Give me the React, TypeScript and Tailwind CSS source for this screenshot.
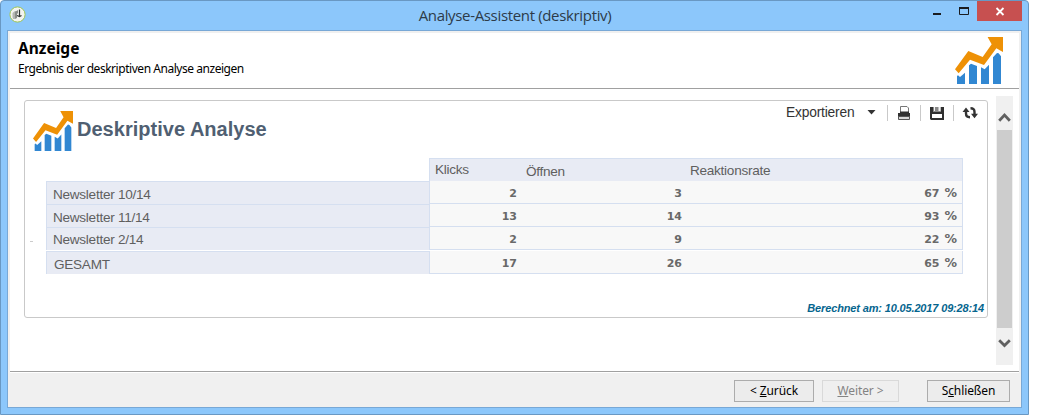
import type { ReactNode } from "react";

const rows = [
  { label: "Newsletter 10/14", clicks: "2", opens: "3", rate: "67" },
  { label: "Newsletter 11/14", clicks: "13", opens: "14", rate: "93" },
  { label: "Newsletter 2/14", clicks: "2", opens: "9", rate: "22" },
  { label: "GESAMT", clicks: "17", opens: "26", rate: "65" },
];

function ChartLogo({ className }: { className: string }) {
  return (
    <svg viewBox="0 0 144 141" preserveAspectRatio="none" className={className}>
      <path
        fill="#ee9106"
        d="M0 97 40 42 83 60 110 22 99 2 98 0H144V45L137 41 124 34 87 84 45 68 11 109Z"
      />
      <path
        fill="#3187d2"
        d="M6 117 9 115 15 120 30 107V141H6ZM42 85 48 80 66 87V141H42ZM78 91 89 97 102 83V141H78ZM114 61 126 48 131 49 138 58V141H114Z"
      />
    </svg>
  );
}

function TitleBar() {
  return (
    <header className="flex h-[29px] shrink-0 items-start">
      <svg viewBox="0 0 17 17" className="mt-[5px] ml-[2px] h-[17px] w-[17px]">
        <circle cx="8.5" cy="8.5" r="7.6" fill="#f4f4ef" stroke="#a1c653" />
        <path d="M3.5 7 6 5 8 5V8L6 9V13L4 13 3.5 11Z" fill="#b4b6b0" />
        <path d="M6 6 9 4V7L8 8V12L6 13Z" fill="#8b8e89" />
        <path d="M10.5 3.5V10.5M8 9.5 10.5 10.5 12.5 9.5" stroke="#30332f" strokeWidth="1.2" fill="none" />
      </svg>
      <h1 className="mt-[3px] w-[963px] pl-[15px] text-center font-['Open_Sans',sans-serif] text-[15px] leading-[22px] tracking-[-0.34px] text-[#2d3b49]">
        Analyse-Assistent (deskriptiv)
      </h1>
      <div className="-ml-[57px] flex">
        <svg viewBox="0 0 45 20" className="h-5 w-[45px]">
          <path d="M1 13H9" stroke="#1a1c20" strokeWidth="2" />
          <path d="M27.5 6.5H36.5V13.5H27.5Z" fill="none" stroke="#1a1c20" />
          <path d="M27 7H37" stroke="#1a1c20" strokeWidth="2" />
        </svg>
        <div className="flex h-5 w-[45px] justify-center bg-[#c75050]">
          <svg viewBox="0 0 45 20" className="h-5 w-[45px]">
            <path d="M19.5 7 26.5 14M26.5 7 19.5 14" stroke="#fff" strokeWidth="1.8" />
          </svg>
        </div>
      </div>
    </header>
  );
}

function Separator() {
  return <div className="h-[16px] w-px bg-[#c9c9c9]" />;
}

function Toolbar() {
  return (
    <div className="mt-[3px] flex h-[17px] items-center">
      <span className="w-[81px] pl-px font-['Liberation_Sans',sans-serif] text-[13.8px] leading-[17px] tracking-[-0.2px] text-[#333]">
        Exportieren
      </span>
      <svg viewBox="0 0 20 16" className="-ml-[4px] h-4 w-[20px]">
        <path d="M5.5 5H13.5L9.5 9.5Z" fill="#333" />
      </svg>
      <div className="w-[5px]" />
      <Separator />
      <svg viewBox="0 0 32 16" className="h-4 w-8" fill="none">
        <path d="M12.5 7V1.5H19L20.5 3V7" stroke="#777" fill="#fff" />
        <path d="M10 8H12V6.5H21V8H22V12H10Z" fill="#303030" />
        <path d="M10.5 11.5H21.5V14.5H10.5Z" fill="#d7d7d7" stroke="#555" />
      </svg>
      <Separator />
      <svg viewBox="0 0 32 16" className="h-4 w-8" fill="none">
        <path d="M9 2H23V15H10L9 14Z" fill="#303030" />
        <path d="M12 2H20V7H12Z" fill="#888" />
        <path d="M13 2V6H14V2ZM17.5 2H19.5V6H17.5Z" fill="#f5f5f5" />
        <path d="M11 9H21V13H11Z" fill="#fff" />
      </svg>
      <Separator />
      <svg viewBox="0 0 32 16" className="h-4 w-[32px]" fill="none">
        <path d="M12 5V8.5C12 11 13.3 12.2 16 12.2M20.5 10.5V7C20.5 4.5 19.2 3.3 16.5 3.3" stroke="#333" strokeWidth="2.4" />
        <path d="M8.5 7 12 2.5 15.5 7ZM17 8.8 20.5 13.2 24 8.8Z" fill="#333" />
      </svg>
    </div>
  );
}

function ReportTable() {
  const label = "font-['Liberation_Sans',sans-serif] text-[13.6px] tracking-[-0.28px] text-[#5f5f5f]";
  return (
    <div className="mt-[6px] ml-[21px] flex">
      <div className="flex w-[383px] flex-col pt-[23px]">
        {rows.map((row, i) => (
          <div
            key={row.label}
            className={`h-[23px] border-t border-l border-[#d5dff0] bg-[#e8ebf4] ${label} ${
              i === 3
                ? "mt-px pl-[7px] leading-[25px]"
                : i === 2
                  ? "pl-[6px] leading-[23px]"
                  : "pl-[6px] leading-[25px]"
            }`}
          >
            {row.label}
          </div>
        ))}
      </div>
      <div className="w-[534px]">
        <div className={`flex h-[23px] border border-b-0 border-[#d5dff0] bg-[#e8ebf4] ${label}`}>
          <span className="w-[91px] pl-[5px] leading-[22px]">Klicks</span>
          <span className="w-[164px] pl-[5px] leading-[25px]">Öffnen</span>
          <span className="pl-[5px] leading-[24px]">Reaktionsrate</span>
        </div>
        {rows.map((row, i) => (
          <div
            key={row.label}
            className={`grid h-[23px] grid-cols-[87px_165px_1fr] border-x border-b border-[#d5dff0] bg-[#f8f8f8] pr-[5px] text-right font-['DejaVu_Sans',sans-serif] text-[11px] leading-[25px] font-bold text-[#696969] ${
              i === 3 ? "mt-px" : ""
            }`}
          >
            <span>{row.clicks}</span>
            <span>{row.opens}</span>
            <span className="flex justify-end">
              {row.rate}
              <span className="ml-[5px] text-[12.5px] leading-[24px]">%</span>
            </span>
          </div>
        ))}
      </div>
    </div>
  );
}

function Report() {
  return (
    <section className="mt-[4px] h-[218px] w-[964px] rounded-[3px] border border-[#c9c9c9]">
      <div className="flex h-[51px]">
        <ChartLogo className="mt-[10px] ml-[8px] h-10 w-10" />
        <h3 className="mt-[15px] ml-[4px] w-[708px] font-['Liberation_Sans',sans-serif] text-[20px] leading-[26px] font-bold tracking-[0.02px] text-[#505f72]">
          Deskriptive Analyse
        </h3>
        <Toolbar />
      </div>
      <div className="relative">
        <ReportTable />
        <span className="absolute top-[83px] left-[5px] h-px w-[3px] bg-[#ccc]" />
      </div>
      <p className="mt-[27px] pr-[3px] text-right font-['Liberation_Sans',sans-serif] text-[11px] leading-[14px] font-bold tracking-[-0.15px] text-[#05658e] italic">
        Berechnet am: 10.05.2017 09:28:14
      </p>
    </section>
  );
}

function Scrollbar() {
  return (
    <div className="ml-[8px] flex h-[269px] w-[17px] flex-col bg-[#f0f0f0]">
      <svg viewBox="0 0 17 34" className="h-[34px] w-[17px]" fill="none">
        <path d="M3.2 24.7 8.5 19 13.8 24.7" stroke="#606060" strokeWidth="2.8" />
      </svg>
      <div className="ml-px h-[198px] w-[15px] bg-[#cdcdcd]" />
      <svg viewBox="0 0 17 37" className="h-[37px] w-[17px]" fill="none">
        <path d="M3.2 12.3 8.5 17.5 13.8 12.3" stroke="#606060" strokeWidth="2.8" />
      </svg>
    </div>
  );
}

function Button({ children, className }: { children: ReactNode; className: string }) {
  return (
    <button
      className={`h-[22px] border font-['Noto_Sans',sans-serif] text-[12px] leading-[20px] tracking-[-0.1px] ${className}`}
    >
      {children}
    </button>
  );
}

export default function App() {
  return (
    <div className="h-[415px] w-[1048px] overflow-hidden bg-white">
      <div className="flex h-[415px] w-[1029px] flex-col rounded-t-[4px] border border-[#6998c3] bg-[#8cc7fb] px-[6px]">
        <TitleBar />
        <main className="flex h-[378px] w-[1015px] shrink-0 flex-col border border-[#78a8d6] bg-[#f0f0f0]">
          <div className="mt-[2px] ml-[2px] h-[338px] w-[1009px] bg-white">
            <div className="flex h-[56px] justify-between border-b border-[#a0a0a0]">
              <div className="pt-[4px] pl-[8px] text-black">
                <h2 className="font-['Noto_Sans',sans-serif] text-[15.5px] leading-[22px] font-bold">Anzeige</h2>
                <p className="mt-px font-['Noto_Sans',sans-serif] text-[12px] leading-[18px] tracking-[-0.46px]">
                  Ergebnis der deskriptiven Analyse anzeigen
                </p>
              </div>
              <ChartLogo className="mt-[4px] mr-[16px] h-[47px] w-12" />
            </div>
            <div className="flex h-[282px] pt-[7px] pl-[14px]">
              <Report />
              <Scrollbar />
            </div>
          </div>
          <div className="ml-[2px] h-[2px] w-[1009px] border-t border-[#a0a0a0] bg-white" />
          <footer className="flex flex-1 justify-end pt-[7px] pr-[11px]">
            <Button className="mr-[8px] w-[80px] border-[#acacac] bg-[#ececec] text-black">
              &lt; <u>Z</u>urück
            </Button>
            <Button className="mr-[28px] w-[77px] border-[#d9d9d9] bg-[#efefef] text-[#838383]">
              <u>W</u>eiter &gt;
            </Button>
            <Button className="w-[83px] border-[#acacac] bg-[#ececec] text-black">
              S<u>c</u>hließen
            </Button>
          </footer>
        </main>
      </div>
    </div>
  );
}
